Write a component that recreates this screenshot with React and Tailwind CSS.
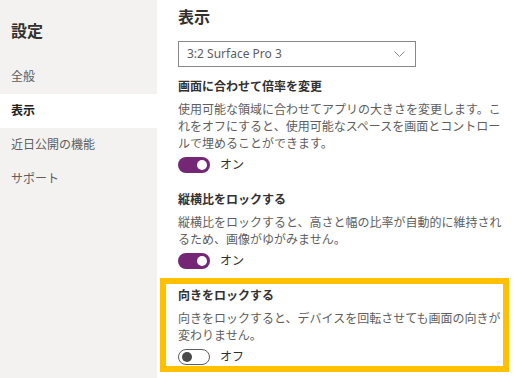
import React from 'react';

const font = { fontFamily: '"Noto Sans", "Noto Sans CJK JP", sans-serif' };

const Toggle = ({ on, label }) => (
  <div className="flex items-center h-[16px]">
    {on ? (
      <div className="w-[32px] h-[16px] rounded-full bg-[#742774] flex items-center justify-end pr-[3px]">
        <div className="w-[10px] h-[10px] rounded-full bg-white" />
      </div>
    ) : (
      <div className="w-[32px] h-[16px] rounded-full border border-[#605e5c] bg-white flex items-center pl-[3px]">
        <div className="w-[10px] h-[10px] rounded-full bg-[#4a4a4a]" />
      </div>
    )}
    <span className="ml-[10px] text-[12px] leading-[16px] text-[#323130]">{label}</span>
  </div>
);

const Setting = ({ title, desc, on, label }) => (
  <div className="flex flex-col">
    <div className="text-[12px] leading-[17px] font-bold text-[#323130]">{title}</div>
    <p className="mt-[6px] w-[330px] text-[12px] leading-[17px] text-[#605e5c]">{desc}</p>
    <div className="mt-[5px]">
      <Toggle on={on} label={label} />
    </div>
  </div>
);

const App = () => {
  const items = ['全般', '表示', '近日公開の機能', 'サポート'];

  return (
    <div className="flex h-[378px] w-[515px] overflow-hidden bg-white" style={font}>
      {/* Sidebar */}
      <div className="w-[157px] shrink-0 bg-[#f3f2f1] flex flex-col">
        <div className="pl-[11px] pt-[20px] h-[60px] text-[16px] leading-[22px] font-semibold text-[#323130]">設定</div>
        {items.map((item) => (
          <div
            key={item}
            className={
              item === '表示'
                ? 'h-[34px] pl-[11px] flex items-center bg-white text-[12px] font-bold text-[#201f1e]'
                : 'h-[34px] pl-[11px] flex items-center text-[12px] text-[#605e5c]'
            }
          >
            {item}
          </div>
        ))}
      </div>

      {/* Main */}
      <div className="flex flex-col pl-[21px]">
        <h1 className="mt-[7px] text-[16px] leading-[20px] font-bold text-[#323130]">表示</h1>

        <div className="mt-[14px] w-[238px] h-[26px] border border-[#8a8886] flex items-center justify-between pl-[8px] pr-[10px]">
          <span className="text-[12px] text-[#605e5c]">3:2 Surface Pro 3</span>
          <svg width="11" height="7" viewBox="0 0 11 7" fill="none">
            <path d="M0.5 0.5 L5.5 5.5 L10.5 0.5" stroke="#8a8886" strokeWidth="1" />
          </svg>
        </div>

        <div className="mt-[11px]">
          <Setting
            title="画面に合わせて倍率を変更"
            desc="使用可能な領域に合わせてアプリの大きさを変更します。これをオフにすると、使用可能なスペースを画面とコントロールで埋めることができます。"
            on
            label="オン"
          />
        </div>

        <div className="mt-[18px]">
          <Setting
            title="縦横比をロックする"
            desc="縦横比をロックすると、高さと幅の比率が自動的に維持されるため、画像がゆがみません。"
            on
            label="オン"
          />
        </div>

        <div className="mt-[9px] -ml-[18px] w-[349px] border-[6px] border-[#ffc000] pl-[12px] pt-[3px] pb-[1px]">
          <Setting
            title="向きをロックする"
            desc="向きをロックすると、デバイスを回転させても画面の向きが変わりません。"
            on={false}
            label="オフ"
          />
        </div>
      </div>
    </div>
  );
};

export default App;
